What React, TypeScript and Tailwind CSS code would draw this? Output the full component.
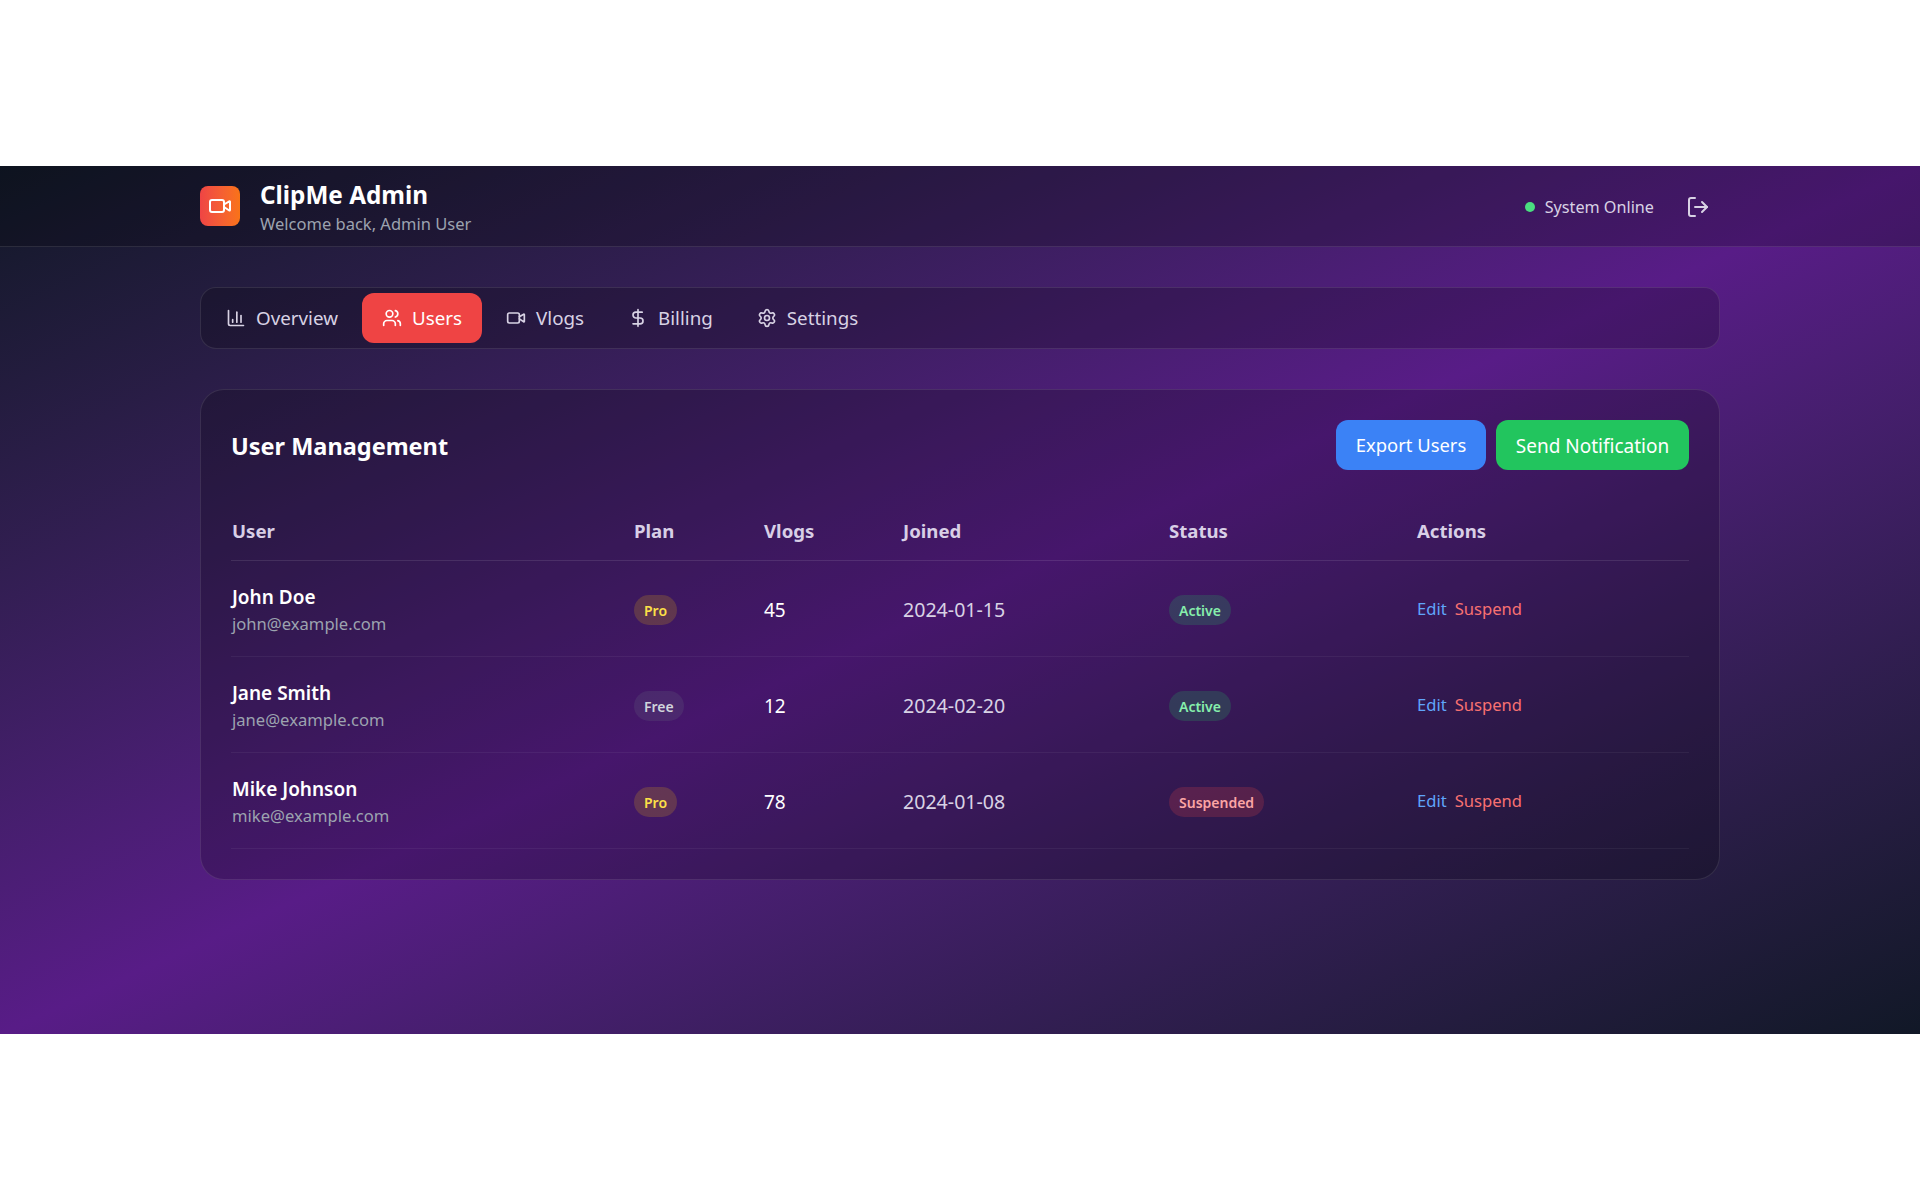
import { BarChart3, DollarSign, LogOut, Settings, Users, Video } from "lucide-react"

const font = "font-['Noto_Sans','Open_Sans',sans-serif]"

const tabs = [
    { label: "Overview", icon: BarChart3 },
    { label: "Users", icon: Users, active: true },
    { label: "Vlogs", icon: Video },
    { label: "Billing", icon: DollarSign },
    { label: "Settings", icon: Settings },
]

const rows = [
    { name: "John Doe", email: "john@example.com", plan: "Pro", vlogs: 45, joined: "2024-01-15", status: "Active" },
    { name: "Jane Smith", email: "jane@example.com", plan: "Free", vlogs: 12, joined: "2024-02-20", status: "Active" },
    { name: "Mike Johnson", email: "mike@example.com", plan: "Pro", vlogs: 78, joined: "2024-01-08", status: "Suspended" },
]

function Pill({ text }: { text: string }) {
    const colors: Record<string, string> = {
        Pro: "bg-[#eab308]/20 text-[#fde047]",
        Free: "bg-[#6b7280]/20 text-[#d1d5db]",
        Active: "bg-[#22c55e]/20 text-[#86efac]",
        Suspended: "bg-[#ef4444]/20 text-[#fca5a5]",
    }
    return (
        <span className={`inline-flex h-[30px] items-center rounded-full px-[10px] text-[14px] font-semibold ${colors[text]}`}>
            {text}
        </span>
    )
}

export default function App() {
    return (
        <div className={`flex min-h-screen items-center bg-white ${font}`}>
            <div className="h-[868px] w-full bg-gradient-to-br from-[#111827] via-[#581c87] to-[#111827]">
                {/* Header */}
                <header className="h-[81px] border-b border-white/10 bg-black/20">
                    <div className="mx-auto flex h-full w-[1520px] items-center justify-between">
                        <div className="flex items-center gap-5">
                            <div className="flex h-10 w-10 items-center justify-center rounded-lg bg-gradient-to-r from-[#ef4444] to-[#f97316]">
                                <Video className="h-6 w-6 text-white" />
                            </div>
                            <div className="pt-[2px]">
                                <h1 className="text-[24.3px] leading-8 font-bold text-white">ClipMe Admin</h1>
                                <p className="pt-px text-[16.5px] leading-6 text-[#9ca3af]">Welcome back, Admin User</p>
                            </div>
                        </div>
                        <div className="flex items-center gap-8 pt-[2px] pr-[10px]">
                            <div className="flex items-center gap-[10px]">
                                <span className="h-[10px] w-[10px] rounded-full bg-[#4ade80]" />
                                <span className="text-[16.2px] text-[#d8d2e4]">System Online</span>
                            </div>
                            <LogOut className="h-6 w-6 text-[#d8d2e4]" />
                        </div>
                    </div>
                </header>

                <main className="mx-auto w-[1520px] pt-10">
                    {/* Tabs */}
                    <nav className="flex h-[62px] items-center gap-1 rounded-2xl border border-white/10 bg-black/20 px-[5px]">
                        {tabs.map(({ label, icon: Icon, active }) => (
                            <button
                                key={label}
                                className={`flex h-[50px] items-center gap-[10px] rounded-xl px-5 text-[18.8px] ${active ? "bg-[#ef4444] text-white" : "text-[#d8d2e4]"}`}
                            >
                                <Icon className="h-5 w-5" />
                                {label}
                            </button>
                        ))}
                    </nav>

                    {/* User table */}
                    <section className="mt-10 rounded-3xl border border-white/10 bg-black/20 p-[30px]">
                        <div className="flex items-center justify-between">
                            <h2 className="pt-[3px] text-[23.5px] font-bold text-white">User Management</h2>
                            <div className="flex gap-[10px]">
                                <button className="h-[50px] w-[150px] rounded-xl bg-[#3b82f6] text-[18.4px] text-white">Export Users</button>
                                <button className="h-[50px] w-[193px] rounded-xl bg-[#22c55e] pt-[2px] text-[19px] text-white">Send Notification</button>
                            </div>
                        </div>
                        <table className="mt-[30px] w-full table-fixed text-left">
                            <colgroup>
                                <col className="w-[402px]" />
                                <col className="w-[130px]" />
                                <col className="w-[139px]" />
                                <col className="w-[266px]" />
                                <col className="w-[248px]" />
                                <col />
                            </colgroup>
                            <thead>
                                <tr className="h-[60px] border-b border-white/10 text-[18.6px] text-[#d8cfe6]">
                                    {["User", "Plan", "Vlogs", "Joined", "Status", "Actions"].map((h) => (
                                        <th key={h} className="px-px pt-[2px] font-bold">{h}</th>
                                    ))}
                                </tr>
                            </thead>
                            <tbody>
                                {rows.map((r) => (
                                    <tr key={r.name} className="h-[96px] border-b border-white/5">
                                        <td className="px-px pt-[2px]">
                                            <div className="text-[19px] leading-7 font-semibold text-white">{r.name}</div>
                                            <div className="pt-px text-[16.6px] leading-6 text-[#9ca3af]">{r.email}</div>
                                        </td>
                                        <td className="px-px pt-[4px]"><Pill text={r.plan} /></td>
                                        <td className="px-px pt-[4px] text-[19px] text-white">{r.vlogs}</td>
                                        <td className="px-px pt-[3px] text-[19.6px] text-[#d8d2e4]">{r.joined}</td>
                                        <td className="px-px pt-[4px]"><Pill text={r.status} /></td>
                                        <td className="px-px pt-[2px] text-[16.6px]">
                                            <span className="text-[#60a5fa]">Edit</span>
                                            <span className="ml-2 text-[#f87171]">Suspend</span>
                                        </td>
                                    </tr>
                                ))}
                            </tbody>
                        </table>
                    </section>
                </main>
            </div>
        </div>
    )
}
